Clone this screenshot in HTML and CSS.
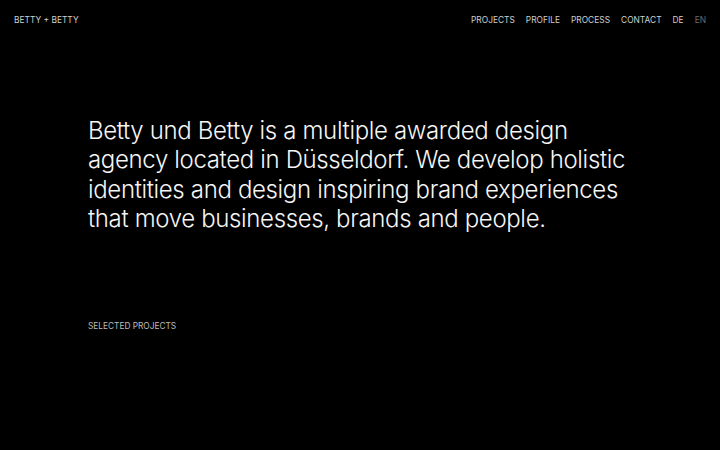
FILE: index.html
```
<!DOCTYPE html>
<html lang="en">
<head>
<meta charset="utf-8">
<title>Betty + Betty</title>
<link rel="stylesheet" href="styles.css">
</head>
<body>
<header class="topbar">
  <a class="logo" href="#">BETTY + BETTY</a>
  <nav class="nav">
    <a href="#">PROJECTS</a>
    <a href="#">PROFILE</a>
    <a href="#">PROCESS</a>
    <a href="#">CONTACT</a>
    <a href="#">DE</a>
    <a href="#" class="muted">EN</a>
  </nav>
</header>
<main class="main">
  <p class="intro">Betty und Betty is a multiple awarded design agency located in Düsseldorf. We develop holistic identities and design inspiring brand experiences that move businesses, brands and people.</p>
  <h2 class="section-label">SELECTED PROJECTS</h2>
</main>
</body>
</html>
```
FILE: styles.css
```
* { box-sizing: border-box; }
html, body { margin: 0; padding: 0; background: #000; height: 100%; }
body {
  font-family: Inter, "Liberation Sans", Arial, sans-serif;
  color: #e6e6e6;
  overflow: hidden;
}
a { color: inherit; text-decoration: none; }
.topbar {
  display: flex;
  justify-content: space-between;
  align-items: center;
  padding: 14px 14px 0 14px;
  font-size: 8.4px;
  font-weight: 400;
  color: #cfcfcf;
  line-height: 12px;
}
.nav { display: flex; gap: 11px; }
.nav .muted { color: #6e6e6e; }
.main { padding: 0 0 0 88px; }
.intro {
  margin: 90px 0 0 0;
  width: 560px;
  font-size: 24px;
  line-height: 29.3px;
  font-weight: 300;
  letter-spacing: -0.35px;
  color: #f5f5f5;
}
.section-label {
  margin: 87px 0 0 0;
  font-size: 8.3px;
  font-weight: 400;
  line-height: 12px;
  color: #bdbdbd;
}
```
